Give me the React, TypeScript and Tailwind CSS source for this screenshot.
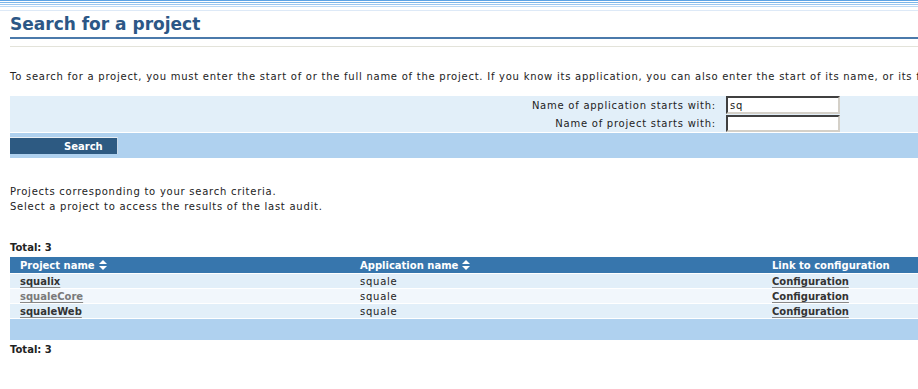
import React from 'react';

const rows = [
  { name: 'squalix', app: 'squale', visited: false },
  { name: 'squaleCore', app: 'squale', visited: true },
  { name: 'squaleWeb', app: 'squale', visited: false },
];

function SortIcon() {
  return (
    <svg width="8" height="10" viewBox="0 0 8 10" className="inline-block ml-[4px] -mt-[1px]">
      <path d="M0 4 L4 0 L8 4 Z" fill="#fff" />
      <path d="M0 6 L8 6 L4 10 Z" fill="#fff" />
    </svg>
  );
}

export default function App() {
  return (
    <div className="w-[918px] h-[389px] overflow-hidden bg-white text-[10px] tracking-[0.75px] text-[#222] font-['DejaVu_Sans',Verdana,sans-serif] whitespace-nowrap">
      {/* top stripes */}
      <div className="flex flex-col">
        <div className="h-px bg-[#5da2e4]" />
        <div className="h-px bg-white" />
        <div className="h-px bg-[#7bb6ea]" />
        <div className="h-px bg-white" />
        <div className="h-px bg-[#9fc8f0]" />
        <div className="h-px bg-white" />
        <div className="h-px bg-[#bcd9f5]" />
        <div className="h-[3px] bg-white" />
        <div className="h-px bg-[#dde9f7]" />
      </div>

      <div className="pl-[10px]">
        <h1 className="mt-[1px] h-[25px] text-[17px] leading-[24px] font-bold tracking-normal text-[#2c5786]">Search for a project</h1>
        <div className="h-[2px] bg-[#4b7aab]" />
        <div className="mt-[7px] h-px bg-[#e3e3da]" />

        <p className="mt-[22px] leading-[15px]">
          To search for a project, you must enter the start of or the full name of the project. If you know its application, you can also enter the start of its name, or its full name.
        </p>

        <div className="mt-[12px] bg-[#e2eff9] flex flex-col gap-[1px]">
          <div className="flex items-center h-[18px]">
            <span className="w-[706px] text-right">Name of application starts with:</span>
            <input
              defaultValue="sq"
              className="ml-[10px] w-[114px] h-[18px] bg-white px-[2px] text-[10px] tracking-[0.75px] border-2 border-t-[#404040] border-l-[#404040] border-r-[#d4d0c8] border-b-[#d4d0c8] outline-none"
            />
          </div>
          <div className="flex items-center h-[17px]">
            <span className="w-[706px] text-right">Name of project starts with:</span>
            <input
              className="ml-[10px] w-[114px] h-[17px] bg-white px-[2px] text-[10px] border-2 border-t-[#404040] border-l-[#404040] border-r-[#d4d0c8] border-b-[#d4d0c8] outline-none"
            />
          </div>
        </div>
        <div className="mt-px h-[25px] bg-[#afd1ef] flex items-center">
          <button className="w-[108px] h-[17px] bg-[#2d5a82] border-t border-t-[#e8eef4] border-r border-r-[#c8d8e8] text-white font-bold tracking-normal text-[10px] leading-[15px] text-left pl-[54px]">
            Search
          </button>
        </div>

        <div className="mt-[26px] leading-[15px]">
          <p>Projects corresponding to your search criteria.</p>
          <p>Select a project to access the results of the last audit.</p>
        </div>

        <p className="mt-[26px] font-bold tracking-normal leading-[15px]">Total: 3</p>

        <div className="mt-[2px] flex flex-col">
          <div className="grid grid-cols-[350px_412px_1fr] h-[16px] items-center bg-[#3776ad] text-white font-bold tracking-normal">
            <span className="pl-[10px]">Project name<SortIcon /></span>
            <span>Application name<SortIcon /></span>
            <span>Link to configuration</span>
          </div>
          {rows.map((r, i) => (
            <div
              key={r.name}
              className={`grid grid-cols-[350px_412px_1fr] h-[15px] items-center border-t border-white ${
                i % 2 === 1 ? 'bg-[#f2f7fc]' : 'bg-[#e2eff9]'
              }`}
            >
              <span className="pl-[10px]">
                <a
                  href="#"
                  className={`font-bold tracking-normal underline decoration-[#888] underline-offset-2 ${
                    r.visited ? 'text-[#7a7a7a]' : 'text-[#333]'
                  }`}
                >
                  {r.name}
                </a>
              </span>
              <span>{r.app}</span>
              <span>
                <a href="#" className="font-bold tracking-normal underline decoration-[#888] underline-offset-2 text-[#333]">
                  Configuration
                </a>
              </span>
            </div>
          ))}
          <div className="h-[21px] mt-px bg-[#afd1ef]" />
        </div>

        <p className="mt-[2px] font-bold tracking-normal leading-[15px]">Total: 3</p>
      </div>
    </div>
  );
}
